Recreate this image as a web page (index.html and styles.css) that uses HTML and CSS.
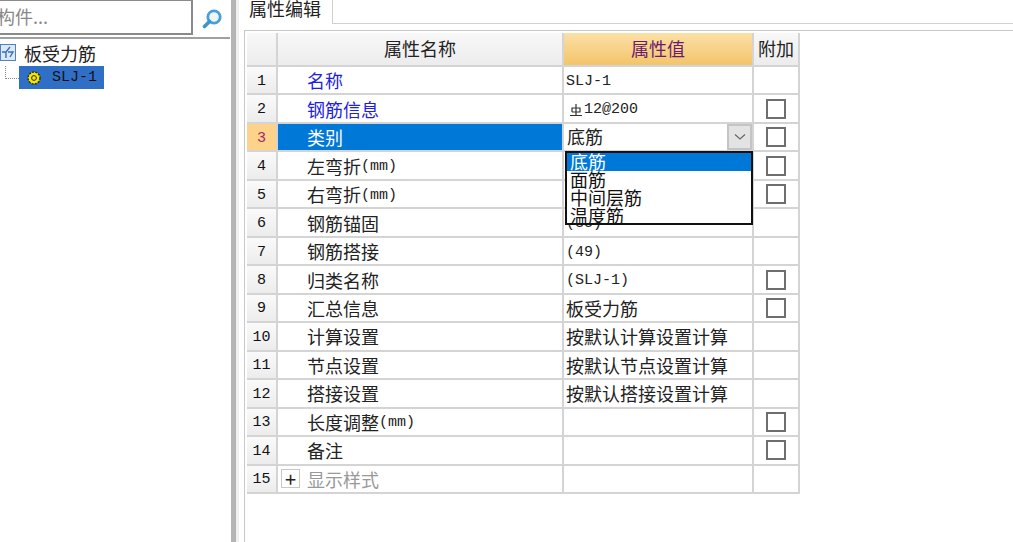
FILE: index.html
```html
<!DOCTYPE html>
<html>
<head>
  <meta charset="utf-8">
  <link rel="stylesheet" href="styles.css">
</head>
<body>
  <div class="left">
    <div class="search">
      <div class="search-input">构件...</div>
      <svg class="search-icon" width="22" height="22" viewBox="0 0 22 22">
        <circle cx="13" cy="9" r="6.2" fill="#eef6fc" stroke="#4a9fd8" stroke-width="2.8"/>
        <path d="M8.5 13.5L3.5 18.5" stroke="#3f93cf" stroke-width="3.6" stroke-linecap="round"/>
      </svg>
    </div>
    <div class="tree">
      <div class="tree-root">
        <svg class="tree-icon" width="16" height="18" viewBox="0 0 16 18">
          <rect x="0.5" y="0.5" width="15" height="16" fill="#dbe8f7" stroke="#4f81c4"/>
          <path d="M2 8H6M10 3L6 8V14M8 8H13L10 13" stroke="#3a6fb5" stroke-width="1.4" fill="none"/>
        </svg>
        <span>板受力筋</span>
      </div>
      <div class="tree-child">
        <span class="tree-line"></span>
        <div class="tree-sel">
          <svg width="16" height="16" viewBox="0 0 16 16">
            <circle cx="8" cy="8" r="6" fill="#f5e600" stroke="#2a2a10" stroke-width="1.4" stroke-dasharray="2 1.2"/>
            <circle cx="8" cy="8" r="2.4" fill="#f5e600" stroke="#2a2a10"/>
          </svg>
          <span class="latin">SLJ-1</span>
        </div>
      </div>
    </div>
  </div>
  <div class="splitter"></div>
  <div class="right">
    <div class="tabs">
      <div class="tab">属性编辑</div>
      <div class="tab-rest"></div>
    </div>
    <div class="panel">
      <div class="grid">
        <div class="hd"></div>
        <div class="hd">属性名称</div>
        <div class="hd hd-on">属性值</div>
        <div class="hd">附加</div>

        <div class="num">1</div>
        <div class="name blue">名称</div>
        <div class="val latin">SLJ-1</div>
        <div class="add"></div>

        <div class="num">2</div>
        <div class="name blue">钢筋信息</div>
        <div class="val latin">
          <svg class="rebar" width="14" height="14" viewBox="0 0 14 14">
            <path d="M3 9V5H11V9H3M7 1V12M1 12.5H13" fill="none" stroke="#333" stroke-width="1.2"/>
          </svg>12@200
        </div>
        <div class="add"><span class="check"></span></div>

        <div class="num num-on">3</div>
        <div class="name name-on">类别</div>
        <div class="val val-edit">
          <span class="edit-text">底筋</span>
          <span class="drop-btn">
            <svg width="12" height="8" viewBox="0 0 12 8"><path d="M1 1.5L6 6L11 1.5" fill="none" stroke="#666" stroke-width="1.2"/></svg>
          </span>
        </div>
        <div class="add"><span class="check"></span></div>

        <div class="num">4</div>
        <div class="name">左弯折<span class="unit">(mm)</span></div>
        <div class="val"></div>
        <div class="add"><span class="check"></span></div>

        <div class="num">5</div>
        <div class="name">右弯折<span class="unit">(mm)</span></div>
        <div class="val"></div>
        <div class="add"><span class="check"></span></div>

        <div class="num">6</div>
        <div class="name">钢筋锚固</div>
        <div class="val latin">(35)</div>
        <div class="add"></div>

        <div class="num">7</div>
        <div class="name">钢筋搭接</div>
        <div class="val latin">(49)</div>
        <div class="add"></div>

        <div class="num">8</div>
        <div class="name">归类名称</div>
        <div class="val latin">(SLJ-1)</div>
        <div class="add"><span class="check"></span></div>

        <div class="num">9</div>
        <div class="name">汇总信息</div>
        <div class="val">板受力筋</div>
        <div class="add"><span class="check"></span></div>

        <div class="num">10</div>
        <div class="name">计算设置</div>
        <div class="val">按默认计算设置计算</div>
        <div class="add"></div>

        <div class="num">11</div>
        <div class="name">节点设置</div>
        <div class="val">按默认节点设置计算</div>
        <div class="add"></div>

        <div class="num">12</div>
        <div class="name">搭接设置</div>
        <div class="val">按默认搭接设置计算</div>
        <div class="add"></div>

        <div class="num">13</div>
        <div class="name">长度调整<span class="unit">(mm)</span></div>
        <div class="val"></div>
        <div class="add"><span class="check"></span></div>

        <div class="num">14</div>
        <div class="name">备注</div>
        <div class="val"></div>
        <div class="add"><span class="check"></span></div>

        <div class="num">15</div>
        <div class="name name-group"><span class="plus">+</span>显示样式</div>
        <div class="val"></div>
        <div class="add"></div>

        <div class="dropdown">
          <div class="opt opt-on">底筋</div>
          <div class="opt">面筋</div>
          <div class="opt">中间层筋</div>
          <div class="opt">温度筋</div>
        </div>
      </div>
    </div>
  </div>
</body>
</html>
```

FILE: styles.css
```css
html, body {
  height: 100%;
}
body {
  margin: 0;
  display: flex;
  overflow: hidden;
  background: #fff;
  color: #222;
  font-family: "Noto Sans CJK SC", sans-serif;
  font-size: 18px;
}
.latin {
  font-family: "Liberation Mono", "Noto Sans CJK SC", monospace;
  font-size: 15px;
}

/* left tree */
.left {
  width: 230px;
  flex: none;
}
.search {
  display: flex;
  align-items: center;
  height: 37px;
  border-bottom: 2px solid #a0a0a0;
}
.search-input {
  width: 193px;
  height: 35px;
  margin-top: -2px;
  box-sizing: border-box;
  border: 1px solid #8a8a8a;
  border-left: 0;
  border-bottom-width: 2px;
  border-right-width: 2px;
  color: #888;
  line-height: 31px;
  white-space: nowrap;
  overflow: hidden;
  text-indent: -3px;
}
.search-icon {
  margin-left: 8px;
}
.tree-root {
  display: flex;
  align-items: center;
  height: 27px;
  gap: 8px;
}
.tree-icon {
  flex: none;
}
.tree-child {
  display: flex;
  height: 23px;
  padding-left: 5px;
}
.tree-line {
  width: 13px;
  height: 12px;
  border-left: 1px dotted #888;
  border-bottom: 1px dotted #888;
}
.tree-sel {
  display: flex;
  align-items: center;
  gap: 10px;
  width: 85px;
  height: 23px;
  padding-left: 7px;
  box-sizing: border-box;
  background: #2f6fc6;
  color: #111;
}

.splitter {
  width: 5px;
  flex: none;
  margin-left: 1px;
  background: #b4b4b4;
  border-right: 3px solid #f0f0f0;
}

/* right panel */
.right {
  flex: 1;
  min-width: 0;
  display: flex;
  flex-direction: column;
}
.tabs {
  display: flex;
  height: 24px;
  margin-left: 1px;
}
.tab {
  width: 93px;
  box-sizing: border-box;
  padding-left: 9px;
  line-height: 17px;
  background: #fff;
  border-right: 1px solid #d0d0d0;
}
.tab-rest {
  flex: 1;
  border-bottom: 1px solid #d0d0d0;
}
.panel {
  flex: 1;
  margin: 6px 0 0 5px;
  padding: 2px 0 0 2px;
  border-top: 1px solid #c8c8c8;
  border-left: 1px solid #c8c8c8;
}

/* property grid */
.grid {
  position: relative;
  display: grid;
  grid-template-columns: 31px 286px 190px 46px;
  grid-template-rows: 34px repeat(15, 28.47px);
  width: 553px;
}
.grid > div {
  box-sizing: border-box;
  display: flex;
  align-items: center;
  border-right: 2px solid #d4d4d4;
  border-bottom: 2px solid #d4d4d4;
  white-space: nowrap;
}
.grid > .dropdown {
  display: block;
  border: 2px solid #111;
}
.hd {
  justify-content: center;
  padding-bottom: 3px;
  background: linear-gradient(#f8f8f8, #ececec);
}
.hd-on {
  background: linear-gradient(#fbe0a6, #f3c46a);
  color: #6a1a70;
}
.num {
  justify-content: center;
  padding-top: 2px;
  background: linear-gradient(#fafafa, #ececec);
  font-family: "Liberation Mono", monospace;
  font-size: 15px;
  color: #111;
}
.num-on {
  background: #fdd28a;
  color: #a02c6a;
}
.name {
  padding-left: 29px;
}
.blue {
  color: #1f1fe0;
}
.name-on {
  background: #0078d7;
  color: #fff;
}
.name-group {
  padding-left: 3px;
  color: #999;
}
.plus {
  width: 17px;
  height: 17px;
  margin-right: 7px;
  border: 1px solid #c8c8c8;
  display: flex;
  align-items: center;
  justify-content: center;
  color: #222;
  font-size: 20px;
  line-height: 1;
}
.unit {
  padding-top: 2px;
  font-family: "Liberation Mono", monospace;
  font-size: 15px;
}
.val {
  padding-left: 2px;
}
.val.latin {
  padding-top: 2px;
}
.val-edit {
  justify-content: space-between;
  padding-left: 3px;
}
.edit-text {
  padding-bottom: 3px;
}
.drop-btn {
  width: 25px;
  height: 26px;
  display: flex;
  align-items: center;
  justify-content: center;
  background: #e3e3e3;
  border: 2px solid #c4c4c4;
  box-sizing: border-box;
}
.rebar {
  margin: 0 1px 0 3px;
}
.add {
  justify-content: center;
}
.check {
  width: 20px;
  height: 20px;
  box-sizing: border-box;
  border: 2px solid #6e6e6e;
  background: #fff;
}

/* open combo list */
.dropdown {
  position: absolute;
  left: 318px;
  top: 118px;
  width: 188px;
  height: 74px;
  box-sizing: border-box;
  background: #fff;
  overflow: hidden;
}
.opt {
  height: 18px;
  line-height: 16px;
  padding-left: 3px;
  color: #111;
}
.opt-on {
  background: #0078d7;
  color: #fff;
}
```
